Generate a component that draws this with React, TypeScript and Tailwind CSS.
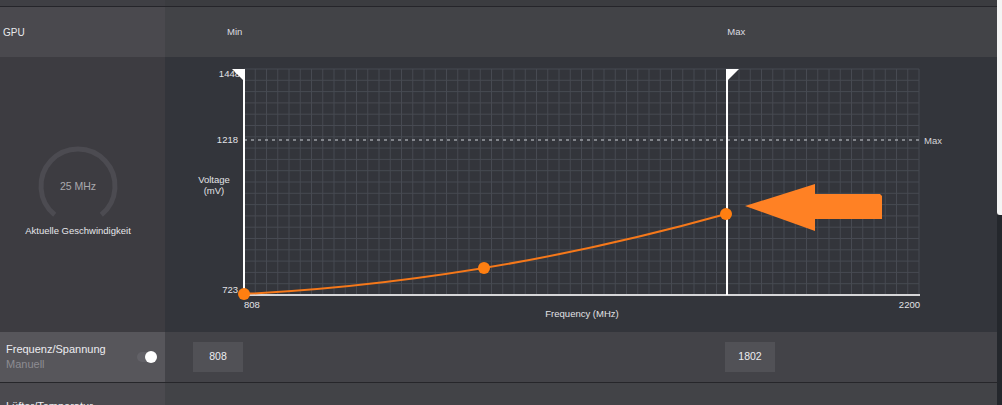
const PLOT = { x0: 79, x1: 754, y0: 12, y1: 238 };
const COLS = 60;
const ROWS = 20;

const vLines = Array.from({ length: COLS + 1 }, (_, i) => PLOT.x0 + ((PLOT.x1 - PLOT.x0) * i) / COLS);
const hLines = Array.from({ length: ROWS + 1 }, (_, i) => PLOT.y0 + ((PLOT.y1 - PLOT.y0) * i) / ROWS);

const points = [
  { x: 79, y: 237 },
  { x: 319, y: 211 },
  { x: 561, y: 157 },
];

const labelFont = { fontFamily: "'Liberation Sans', Arial, sans-serif" };

function VoltageChart() {
  return (
    <svg width="832" height="275" viewBox="0 0 832 275" className="block" style={labelFont}>
      {/* grid */}
      <g stroke="#474a52" strokeWidth="1">
        {vLines.map((x) => (
          <line key={`v${x}`} x1={x} y1={PLOT.y0} x2={x} y2={PLOT.y1} />
        ))}
        {hLines.map((y) => (
          <line key={`h${y}`} x1={PLOT.x0} y1={y} x2={PLOT.x1} y2={y} />
        ))}
      </g>

      {/* max voltage guide */}
      <line x1={PLOT.x0} y1="83" x2={PLOT.x1} y2="83" stroke="#9c9ea5" strokeWidth="1.5" strokeDasharray="3 4" />
      <text x="759" y="87" fontSize="9.5" fill="#d4d4d8">Max</text>

      {/* axes */}
      <rect x="79" y="237" width="676" height="2" fill="#d6d6d8" />

      {/* y labels */}
      <g fontSize="9.5" fill="#e2e2e6" textAnchor="end">
        <text x="75" y="20">1448</text>
        <text x="73" y="86">1218</text>
        <text x="73" y="236">723</text>
      </g>
      <g fontSize="9.5" fill="#e2e2e6" textAnchor="middle">
        <text x="49" y="126">Voltage</text>
        <text x="49" y="137">(mV)</text>
      </g>

      {/* x labels */}
      <text x="79" y="251" fontSize="9.5" fill="#e2e2e6">808</text>
      <text x="755" y="251" fontSize="9.5" fill="#e2e2e6" textAnchor="end">2200</text>
      <text x="417" y="260" fontSize="9.5" fill="#e2e2e6" textAnchor="middle">Frequency (MHz)</text>

      {/* min / max handles */}
      <rect x="78" y="12" width="2" height="226" fill="#ffffff" />
      <polygon points="67,12 80,12 80,25" fill="#ffffff" />
      <rect x="561" y="12" width="2" height="226" fill="#ffffff" />
      <polygon points="561,12 574,12 561,25" fill="#ffffff" />

      {/* curve */}
      <path d="M79 237 Q318 225 561 157" fill="none" stroke="#f5781a" strokeWidth="2" />
      {points.map((p) => (
        <circle key={p.x} cx={p.x} cy={p.y} r="6" fill="#ff7f11" />
      ))}

      {/* arrow */}
      <polygon
        points="580,149 650,127 650,137 715,137 717,139 717,162 650,162 650,174"
        fill="#ff8124"
      />
    </svg>
  );
}

function SpeedGauge() {
  return (
    <div className="flex flex-col items-center pr-[9px] pt-[87px]">
      <svg width="84" height="76" viewBox="0 0 84 76" style={labelFont}>
        <path
          d="M18.7 70.75 A37 37 0 1 1 65.3 70.75"
          fill="none"
          stroke="#4c4b51"
          strokeWidth="5"
        />
        <text x="42" y="46" fontSize="10.5" fill="#a9a9ae" textAnchor="middle">
          25 MHz
        </text>
      </svg>
      <span className="mt-[5px] text-[9.5px] leading-3 text-[#e6e6ea]">Aktuelle Geschwindigkeit</span>
    </div>
  );
}

function ValueBox({ value }: { value: string }) {
  return (
    <div className="flex h-[30px] w-[50px] items-center justify-center bg-[#515156] text-[10.5px] text-[#ececf0]">
      {value}
    </div>
  );
}

export default function App() {
  return (
    <div className="flex h-[405px] w-[1002px] overflow-hidden bg-[#3e3e43] font-['Liberation_Sans',Arial,sans-serif]">
      <div className="flex w-[997px] flex-col">
        {/* tail of the previous section */}
        <div className="grid h-[7px] shrink-0 grid-cols-[165px_1fr] border-b border-[#25252a]">
          <div className="bg-[#3f3f44]" />
          <div className="bg-[#3b3c40]" />
        </div>

        {/* header */}
        <div className="grid h-[50px] shrink-0 grid-cols-[165px_1fr]">
          <div className="flex items-center bg-[#4a494e] pl-[3px] text-[10px] text-[#e8e8ec]">GPU</div>
          <div className="flex items-center bg-[#424347] text-[9.5px] text-[#dcdce0]">
            <span className="ml-[62px]">Min</span>
            <span className="ml-[485px]">Max</span>
          </div>
        </div>

        {/* curve editor */}
        <div className="grid h-[275px] shrink-0 grid-cols-[165px_1fr]">
          <div className="bg-[#3d3c41]">
            <SpeedGauge />
          </div>
          <div className="bg-[#33353b]">
            <VoltageChart />
          </div>
        </div>

        {/* frequency / voltage mode */}
        <div className="grid h-[51px] shrink-0 grid-cols-[165px_1fr] border-b border-[#26262a]">
          <div className="flex items-center justify-between bg-[#57565b] pl-[6px] pr-[8px]">
            <div className="flex flex-col">
              <span className="text-[11px] leading-[15px] text-[#ececf0]">Frequenz/Spannung</span>
              <span className="text-[11px] leading-[15px] text-[#8d8c92]">Manuell</span>
            </div>
            <div className="relative h-[10px] w-[20px] rounded-full bg-[#626167]">
              <div className="absolute right-0 top-[-1px] h-[12px] w-[12px] rounded-full bg-white" />
            </div>
          </div>
          <div className="flex items-center bg-[#434348] pl-[28px]">
            <ValueBox value="808" />
            <div className="ml-[482px]">
              <ValueBox value="1802" />
            </div>
          </div>
        </div>

        {/* next section */}
        <div className="grid flex-1 grid-cols-[165px_1fr]">
          <div className="bg-[#4b4a4f] pl-[6px] pt-[17px] text-[11px] leading-[13px] text-[#ececf0]">
            Lüfter/Temperatur
          </div>
          <div className="bg-[#424347]" />
        </div>
      </div>

      {/* scrollbar */}
      <div className="flex w-[5px] flex-col">
        <div className="h-[215px] rounded-bl-[3px] bg-[#f4f4f4]" />
        <div className="flex-1 bg-[#24272c]" />
      </div>
    </div>
  );
}
